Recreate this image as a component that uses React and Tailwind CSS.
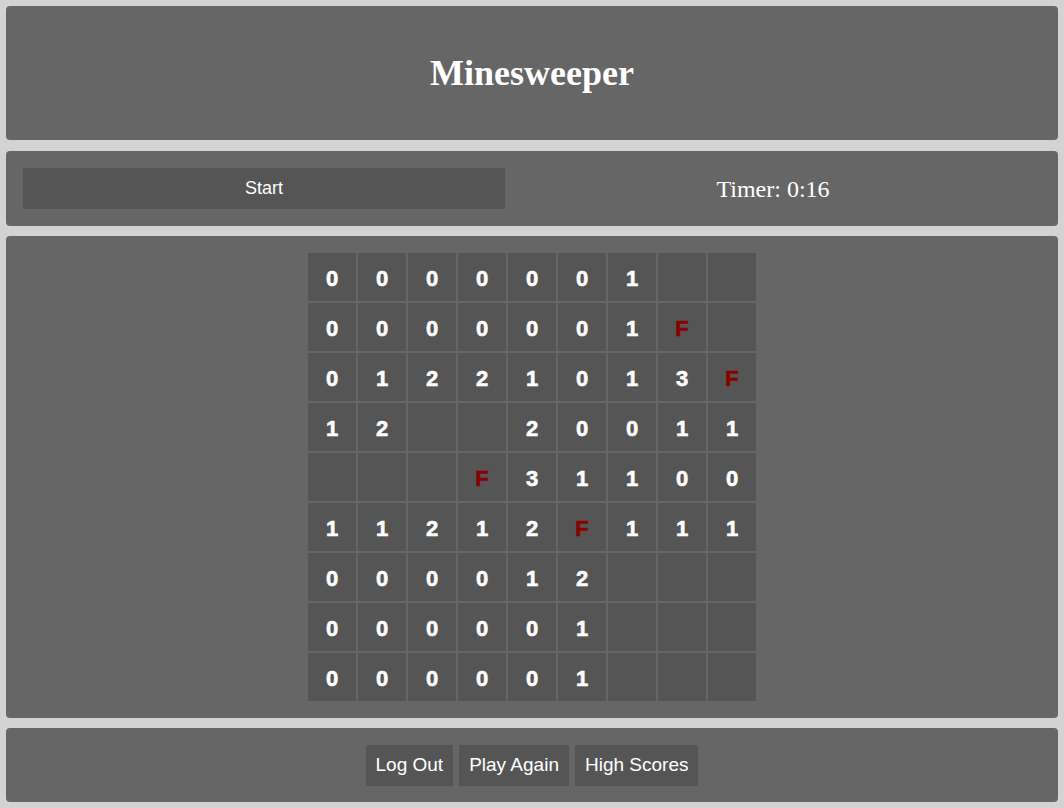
import React from 'react';

const board = [
    ['0', '0', '0', '0', '0', '0', '1', '', ''],
    ['0', '0', '0', '0', '0', '0', '1', 'F', ''],
    ['0', '1', '2', '2', '1', '0', '1', '3', 'F'],
    ['1', '2', '', '', '2', '0', '0', '1', '1'],
    ['', '', '', 'F', '3', '1', '1', '0', '0'],
    ['1', '1', '2', '1', '2', 'F', '1', '1', '1'],
    ['0', '0', '0', '0', '1', '2', '', '', ''],
    ['0', '0', '0', '0', '0', '1', '', '', ''],
    ['0', '0', '0', '0', '0', '1', '', '', ''],
];

function Cell({value}) {
    const flag = value === 'F';
    return (
        <div
            className={`w-[48px] h-[48px] bg-[#555555] flex items-center justify-center pt-[2px] text-[22px] font-bold font-['Liberation_Sans',Arial,sans-serif] [-webkit-text-stroke:0.6px_currentColor] ${flag ? 'text-[#8b0000]' : 'text-white'}`}>
            {value}
        </div>
    );
}

export default function App() {
    return (
        <div className="min-h-[808px] bg-[#d3d3d3] p-[6px] flex flex-col font-['Liberation_Sans',Arial,sans-serif]">
            {/* title */}
            <header className="h-[134px] bg-[#666666] rounded-[4px] flex items-center justify-center">
                <h1 className="text-white text-[36px] font-bold font-['Liberation_Serif','Times_New_Roman',serif]">Minesweeper</h1>
            </header>

            {/* controls */}
            <div className="mt-[11px] h-[75px] bg-[#666666] rounded-[4px] px-[17px] flex items-center">
                <button className="w-[482px] h-[41px] bg-[#555555] text-white text-[18px]">Start</button>
                <div className="flex-1 text-center text-white text-[24px] font-['Liberation_Serif','Times_New_Roman',serif]">Timer: 0:16</div>
            </div>

            {/* board */}
            <div className="mt-[10px] h-[482px] bg-[#666666] rounded-[4px] flex items-center justify-center">
                <div className="grid grid-cols-[repeat(9,48px)] gap-[2px]">
                    {board.map((row, r) => row.map((v, c) => <Cell key={`${r}-${c}`} value={v}/>))}
                </div>
            </div>

            {/* footer buttons */}
            <div className="mt-[10px] h-[74px] bg-[#666666] rounded-[4px] flex items-center justify-center gap-[6px]">
                <button className="h-[41px] px-[10px] bg-[#555555] text-white text-[19px]">Log Out</button>
                <button className="h-[41px] px-[10px] bg-[#555555] text-white text-[19px]">Play Again</button>
                <button className="h-[41px] px-[10px] bg-[#555555] text-white text-[19px]">High Scores</button>
            </div>
        </div>
    );
}
